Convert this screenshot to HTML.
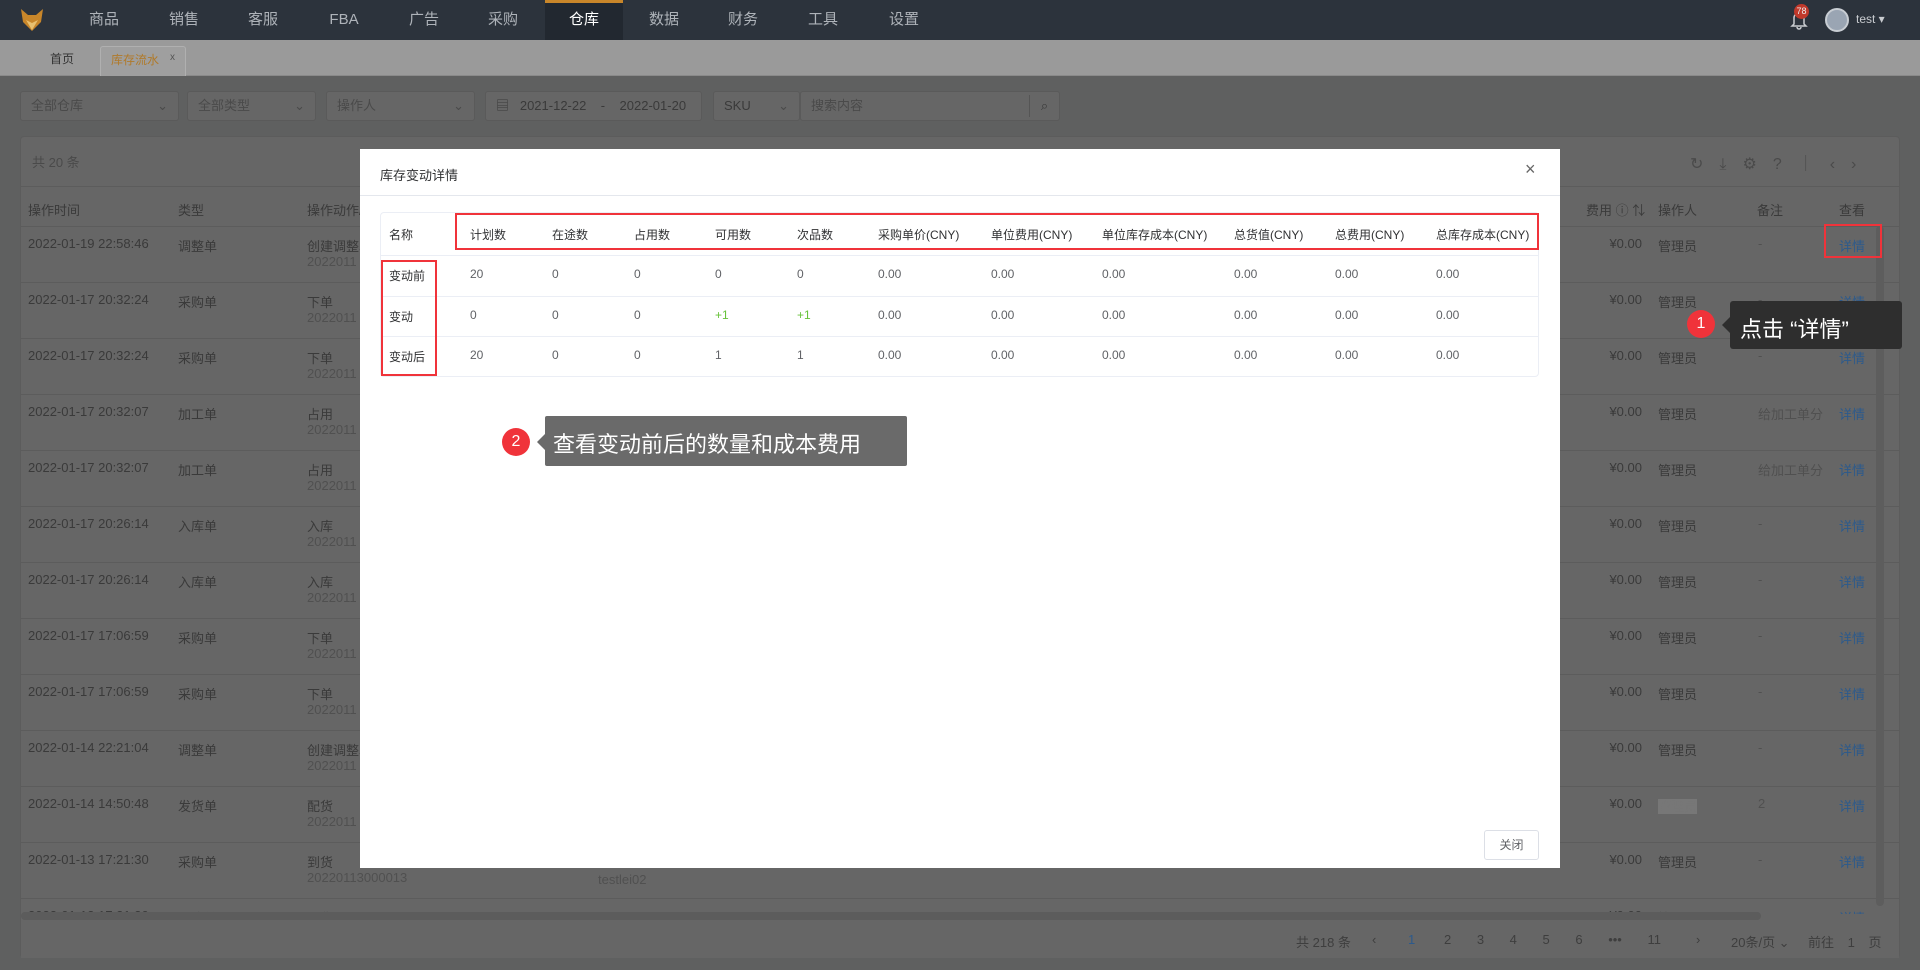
<!DOCTYPE html>
<html><head><meta charset="utf-8">
<style>
*{margin:0;padding:0;box-sizing:border-box}
body{width:1920px;height:970px;overflow:hidden;background:#5f6060;font-family:"Liberation Sans","Noto Sans CJK SC",sans-serif;font-size:13px;color:#333;position:relative}
.a{position:absolute;white-space:nowrap}
.nav{left:0;top:0;width:1920px;height:40px;background:#2c333c}
.nav .it{position:absolute;top:0;height:40px;line-height:40px;color:#aeb3b9;font-size:15px;transform:translateX(-50%)}
.tabs{left:0;top:40px;width:1920px;height:36px;background:#9a9a9a;border-bottom:1px solid #8a8a8a}
.inp{height:30px;border:1px solid #5a5a5a;border-radius:3px;background:#666;color:#4a4a4a;line-height:28px;padding-left:10px;font-size:13px;top:91px}
.card{left:20px;top:136px;width:1880px;height:822px;background:#666;border:1px solid #5c5c5c;border-radius:4px}
.t{color:#3a3a3a;font-size:13px}
.s{color:#505050;font-size:13px}
.ln{left:21px;width:1878px;height:1px;background:#5c5c5c}
.modal{left:360px;top:149px;width:1200px;height:719px;background:#fff}
.red{border:2px solid #f0333a}
</style></head><body>
<div class="a nav">
 <svg class="a" style="left:20px;top:8px" width="24" height="24" viewBox="0 0 24 24"><path d="M1 1 L8 7 L16 7 L23 1 L21 14 L12 23 L3 14Z" fill="#c8862a"/><path d="M6 12 L12 22 L18 12 L12 15Z" fill="#e8c070"/></svg>
 <div class="a" style="left:545px;top:0;width:78px;height:40px;background:#222830;border-top:3px solid #c8862a"></div>
 <span class="it" style="left:104px">商品</span><span class="it" style="left:184px">销售</span><span class="it" style="left:263px">客服</span><span class="it" style="left:344px">FBA</span><span class="it" style="left:424px">广告</span><span class="it" style="left:503px">采购</span><span class="it" style="left:584px;color:#fff">仓库</span><span class="it" style="left:664px">数据</span><span class="it" style="left:743px">财务</span><span class="it" style="left:823px">工具</span><span class="it" style="left:904px">设置</span>
 <svg class="a" style="left:1790px;top:10px" width="18" height="20" viewBox="0 0 18 20"><path d="M4 14 V8 a5 5 0 0 1 10 0 V14 L16 16 H2 Z M7 17 a2 2 0 0 0 4 0" fill="none" stroke="#c9ccd0" stroke-width="1.5"/></svg>
 <div class="a" style="left:1794px;top:4px;width:15px;height:15px;border-radius:50%;background:#c0392b;color:#eee;font-size:9px;line-height:15px;text-align:center">78</div>
 <div class="a" style="left:1825px;top:8px;width:24px;height:24px;border-radius:50%;background:#9aa5b3;border:2px solid #c8cdd3"></div>
 <span class="a" style="left:1856px;top:12px;color:#c9ccd0;font-size:12px">test ▾</span>
</div>
<div class="a tabs">
 <span class="a" style="left:50px;top:10px;color:#333;font-size:12px">首页</span>
 <div class="a" style="left:100px;top:6px;width:86px;height:30px;background:#9f9f9f;border:1px solid #b0b0b0;border-bottom:none;border-radius:3px 3px 0 0"></div>
 <span class="a" style="left:111px;top:11px;color:#b07a2a;font-size:12px">库存流水</span><span class="a" style="left:170px;top:12px;color:#555;font-size:10px">x</span>
</div>
<div class="a inp" style="left:20px;width:159px">全部仓库<span class="a" style="right:10px;top:0">⌄</span></div>
<div class="a inp" style="left:187px;width:129px">全部类型<span class="a" style="right:10px;top:0">⌄</span></div>
<div class="a inp" style="left:326px;width:149px">操作人<span class="a" style="right:10px;top:0">⌄</span></div>
<div class="a inp" style="left:485px;width:217px;color:#3a3a3a">▤ &nbsp; 2021-12-22 &nbsp;&nbsp; - &nbsp;&nbsp; 2022-01-20</div>
<div class="a inp" style="left:713px;width:87px;color:#3a3a3a">SKU<span class="a" style="right:10px;top:0;color:#4a4a4a">⌄</span></div>
<div class="a inp" style="left:800px;width:260px">搜索内容<span class="a" style="right:0;top:3px;width:30px;height:22px;border-left:1px solid #555;text-align:center;line-height:22px;color:#3a3a3a">⌕</span></div>
<div class="a card"></div>
<span class="a t" style="left:32px;top:152px;color:#4a4a4a">共 20 条</span>
<span class="a" style="left:1690px;top:150px;color:#4a4a4a;font-size:16px;letter-spacing:16px">↻⤓⚙?｜‹›</span>
<div class="a ln" style="top:186px"></div>
<span class="a t" style="left:28px;top:200px">操作时间</span><span class="a t" style="left:178px;top:200px">类型</span><span class="a t" style="left:307px;top:200px">操作动作/</span>
<span class="a t" style="left:1586px;top:200px">费用 ⓘ ⇅</span><span class="a t" style="left:1658px;top:200px">操作人</span><span class="a t" style="left:1757px;top:200px">备注</span><span class="a t" style="left:1839px;top:200px">查看</span>
<div class="a ln" style="top:226px"></div>
<div id="rows"></div>
<script>
var d=[["2022-01-19 22:58:46","调整单","创建调整单"],["2022-01-17 20:32:24","采购单","下单"],["2022-01-17 20:32:24","采购单","下单"],["2022-01-17 20:32:07","加工单","占用"],["2022-01-17 20:32:07","加工单","占用"],["2022-01-17 20:26:14","入库单","入库"],["2022-01-17 20:26:14","入库单","入库"],["2022-01-17 17:06:59","采购单","下单"],["2022-01-17 17:06:59","采购单","下单"],["2022-01-14 22:21:04","调整单","创建调整单"],["2022-01-14 14:50:48","发货单","配货"],["2022-01-13 17:21:30","采购单","到货"],["2022-01-13 17:21:30","采购单","到货"]];
var h="";
for(var i=0;i<d.length;i++){var y=226+56*i;var ty=y+10;
h+='<span class="a t" style="left:28px;top:'+ty+'px">'+d[i][0]+'</span><span class="a t" style="left:178px;top:'+ty+'px">'+d[i][1]+'</span><span class="a t" style="left:307px;top:'+ty+'px">'+d[i][2]+'</span><span class="a s" style="left:307px;top:'+(ty+18)+'px">'+(i==11?'20220113000013':'2022011')+'</span>';
h+='<span class="a t" style="right:278px;top:'+ty+'px">¥0.00</span><span class="a t" style="left:1658px;top:'+ty+'px">'+(i==10?'<span style="background:#777;color:#777">管理员</span>':'管理员')+'</span><span class="a s" style="left:1758px;top:'+ty+'px">'+(i==3||i==4?'给加工单分':(i==10?'2':'-'))+'</span><span class="a" style="left:1839px;top:'+ty+'px;color:#2c5a8c">详情</span>';
h+='<div class="a ln" style="top:'+(y+56)+'px"></div>';}
h+='<span class="a s" style="left:598px;top:872px">testlei02</span>';
document.getElementById("rows").innerHTML=h;
</script>
<div class="a" style="left:21px;top:914px;width:1878px;height:44px;background:#666"></div>
<div class="a" style="left:21px;top:912px;width:1740px;height:8px;background:#5c5c5c;border-radius:4px"></div>
<div class="a" style="left:1876px;top:226px;width:8px;height:680px;background:#5d5d5d;border-radius:4px"></div>
<span class="a t" style="left:1296px;top:932px;color:#3e3e3e">共 218 条</span>
<span class="a t" style="left:1372px;top:932px;color:#3e3e3e">‹</span>
<span class="a t" style="left:1408px;top:932px;color:#2c5a8c">1</span>
<span class="a t" style="left:1444px;top:932px;color:#3e3e3e;word-spacing:22px">2 3 4 5 6 ••• 11</span>
<span class="a t" style="left:1696px;top:932px;color:#3e3e3e">›</span>
<span class="a t" style="left:1731px;top:932px;color:#3e3e3e">20条/页 ⌄</span>
<span class="a t" style="left:1808px;top:932px;color:#3e3e3e;word-spacing:10px">前往 1 页</span>

<div class="a modal">
 <span class="a" style="left:20px;top:16px;color:#303133;font-size:13px">库存变动详情</span>
 <span class="a" style="left:1165px;top:10px;color:#666;font-size:18px">×</span>
 <div class="a" style="left:0;top:46px;width:1200px;height:1px;background:#e4e7ed"></div>
 <div class="a" style="left:20px;top:63px;width:1159px;height:165px;border:1px solid #ebeef5;border-radius:4px"></div>
 <div class="a" style="left:21px;top:106px;width:1157px;height:1px;background:#ebeef5"></div>
 <div class="a" style="left:21px;top:147px;width:1157px;height:1px;background:#ebeef5"></div>
 <div class="a" style="left:21px;top:187px;width:1157px;height:1px;background:#ebeef5"></div>
 <div id="mt"></div>
 <div class="a red" style="left:95px;top:64px;width:1084px;height:37px"></div>
 <div class="a red" style="left:21px;top:111px;width:56px;height:116px"></div>
 <div class="a" style="left:1124px;top:681px;width:55px;height:30px;border:1px solid #dcdfe6;border-radius:3px;text-align:center;line-height:28px;font-size:12px;color:#606266">关闭</div>
</div>
<script>
var xs=[29,110,192,274,355,437,518,631,742,874,975,1076];
var rs=[["名称","计划数","在途数","占用数","可用数","次品数","采购单价(CNY)","单位费用(CNY)","单位库存成本(CNY)","总货值(CNY)","总费用(CNY)","总库存成本(CNY)"],["变动前","20","0","0","0","0","0.00","0.00","0.00","0.00","0.00","0.00"],["变动","0","0","0","+1","+1","0.00","0.00","0.00","0.00","0.00","0.00"],["变动后","20","0","0","1","1","0.00","0.00","0.00","0.00","0.00","0.00"]];
var ys=[77,118,159,199],m="";
for(var r=0;r<4;r++)for(var c=0;c<12;c++){var col=(r==2&&(c==4||c==5))?'#67c23a':(c==0||r==0?'#303133':'#606266');m+='<span class="a" style="left:'+xs[c]+'px;top:'+ys[r]+'px;font-size:12px;color:'+col+'">'+rs[r][c]+'</span>';}
document.getElementById("mt").innerHTML=m;
</script>

<div class="a" style="left:1824px;top:224px;width:58px;height:34px;border:2px solid #f0333a"></div>
<div class="a" style="left:545px;top:416px;width:362px;height:50px;background:#6a6a6a;border-radius:2px"></div>
<div class="a" style="left:537px;top:434px;width:0;height:0;border-top:8px solid transparent;border-bottom:8px solid transparent;border-right:8px solid #6a6a6a"></div>
<span class="a" style="left:553px;top:427px;color:#fff;font-size:22px">查看变动前后的数量和成本费用</span>
<div class="a" style="left:502px;top:428px;width:28px;height:28px;border-radius:50%;background:#f0333a;color:#fff;text-align:center;line-height:28px;font-size:16px">2</div>
<div class="a" style="left:1730px;top:301px;width:172px;height:48px;background:#2e2e2e;border-radius:3px"></div>
<div class="a" style="left:1722px;top:317px;width:0;height:0;border-top:8px solid transparent;border-bottom:8px solid transparent;border-right:8px solid #2e2e2e"></div>
<span class="a" style="left:1740px;top:312px;color:#fff;font-size:22px">点击 “详情”</span>
<div class="a" style="left:1687px;top:310px;width:28px;height:28px;border-radius:50%;background:#f0333a;color:#fff;text-align:center;line-height:28px;font-size:16px">1</div>
</body></html>
